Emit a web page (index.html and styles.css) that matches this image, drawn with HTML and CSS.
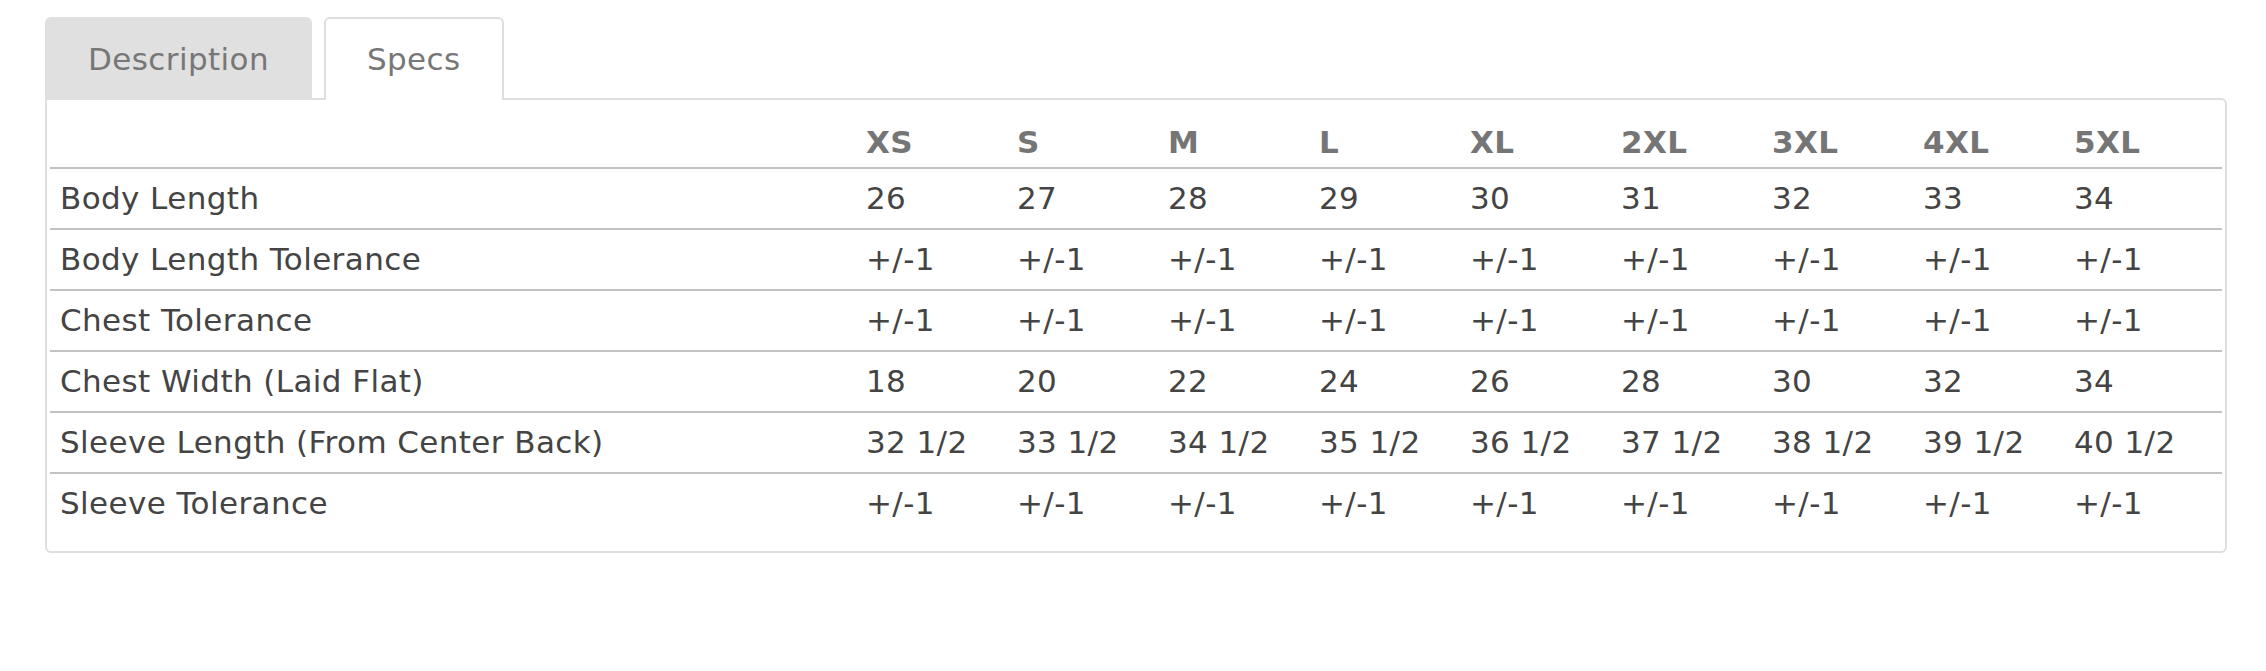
FILE: index.html
```html
<!DOCTYPE html>
<html lang="en">
<head>
<meta charset="utf-8">
<title>Specs</title>
<link rel="stylesheet" href="styles.css">
</head>
<body>
<div class="product-tabs">
  <div class="tab-list">
    <div class="tab">Description</div>
    <div class="tab tab-active">Specs</div>
  </div>
  <div class="tab-panel">
    <table class="specs">
      <colgroup>
        <col class="col-label">
        <col class="col-size"><col class="col-size"><col class="col-size">
        <col class="col-size"><col class="col-size"><col class="col-size">
        <col class="col-size"><col class="col-size"><col class="col-last">
      </colgroup>
      <thead>
        <tr><th></th><th>XS</th><th>S</th><th>M</th><th>L</th><th>XL</th><th>2XL</th><th>3XL</th><th>4XL</th><th>5XL</th></tr>
      </thead>
      <tbody>
        <tr><td>Body Length</td><td>26</td><td>27</td><td>28</td><td>29</td><td>30</td><td>31</td><td>32</td><td>33</td><td>34</td></tr>
        <tr><td>Body Length Tolerance</td><td>+/-1</td><td>+/-1</td><td>+/-1</td><td>+/-1</td><td>+/-1</td><td>+/-1</td><td>+/-1</td><td>+/-1</td><td>+/-1</td></tr>
        <tr><td>Chest Tolerance</td><td>+/-1</td><td>+/-1</td><td>+/-1</td><td>+/-1</td><td>+/-1</td><td>+/-1</td><td>+/-1</td><td>+/-1</td><td>+/-1</td></tr>
        <tr><td>Chest Width (Laid Flat)</td><td>18</td><td>20</td><td>22</td><td>24</td><td>26</td><td>28</td><td>30</td><td>32</td><td>34</td></tr>
        <tr><td>Sleeve Length (From Center Back)</td><td>32 1/2</td><td>33 1/2</td><td>34 1/2</td><td>35 1/2</td><td>36 1/2</td><td>37 1/2</td><td>38 1/2</td><td>39 1/2</td><td>40 1/2</td></tr>
        <tr><td>Sleeve Tolerance</td><td>+/-1</td><td>+/-1</td><td>+/-1</td><td>+/-1</td><td>+/-1</td><td>+/-1</td><td>+/-1</td><td>+/-1</td><td>+/-1</td></tr>
      </tbody>
    </table>
  </div>
</div>
</body>
</html>
```
FILE: styles.css
```css
html, body {
  margin: 0;
  padding: 0;
  background: #ffffff;
}

body {
  font-family: "DejaVu Sans", "Liberation Sans", sans-serif;
  font-size: 31px;
  letter-spacing: 0.4px;
  color: #444444;
}

.product-tabs {
  padding: 17px 39px 0 45px;
}

.tab-list {
  display: flex;
  gap: 12px;
  margin-bottom: -2px;
  position: relative;
  z-index: 1;
}

.tab {
  box-sizing: border-box;
  height: 83px;
  padding: 0 41px 2px 41px;
  display: flex;
  align-items: center;
  background: #e0e0e0;
  border: 2px solid #e0e0e0;
  border-bottom: none;
  border-radius: 6px 6px 0 0;
  color: #777777;
}

.tab-active {
  background: #ffffff;
  border-color: #dedede;
}

.tab-panel {
  border: 2px solid #dedede;
  border-radius: 0 6px 6px 6px;
  padding: 18px 3px 18px 3px;
}

.specs {
  width: 100%;
  table-layout: fixed;
  border-collapse: separate;
  border-spacing: 0;
}

.col-label {
  width: 806px;
}

.col-size {
  width: 151px;
}

.specs th,
.specs td {
  padding: 0 0 0 10px;
  text-align: left;
  white-space: nowrap;
}

.specs th {
  line-height: 49px;
  font-weight: bold;
  color: #757575;
}

.specs td {
  line-height: 59px;
  border-top: 2px solid #c2c2c2;
}
```
